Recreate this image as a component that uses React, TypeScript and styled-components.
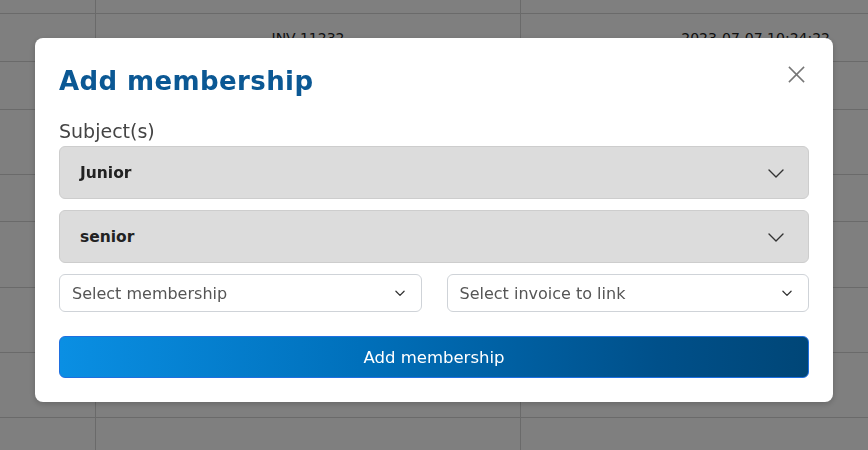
import React from "react";
import styled, { createGlobalStyle } from "styled-components";

const rows = [
  { h: 14 },
  { h: 48, inv: "INV-11232", date: "2023-07-07 10:24:22" },
  { h: 48 },
  { h: 65 },
  { h: 47 },
  { h: 66 },
  { h: 65 },
  { h: 65 },
  { h: 40 },
];

function Chevron({ size }: { size: number }) {
  return (
    <svg width={size} height={size} viewBox="0 0 24 24" fill="none" stroke="currentColor" strokeWidth={size > 14 ? 1.4 : 2.2} strokeLinecap="round" strokeLinejoin="round">
      <polyline points="5 9 12 16 19 9" />
    </svg>
  );
}

function App() {
  return (
    <>
      <Global />
      <S.Table>
        {rows.map((r, i) => (
          <S.Row key={i} style={{ height: r.h }}>
            <S.Cell />
            <S.Cell $center>{r.inv}</S.Cell>
            <S.Cell $right>{r.date}</S.Cell>
          </S.Row>
        ))}
      </S.Table>
      <S.Overlay>
        <S.Modal>
          <S.Header>
            <S.Title>Add membership</S.Title>
            <S.Close aria-label="close">
              <svg width="19" height="19" viewBox="0 0 20 20" stroke="currentColor" strokeWidth="1.6">
                <line x1="2" y1="2" x2="18" y2="18" />
                <line x1="18" y1="2" x2="2" y2="18" />
              </svg>
            </S.Close>
          </S.Header>
          <S.Label>Subject(s)</S.Label>
          <S.Subject>
            <span>Junior</span>
            <Chevron size={24} />
          </S.Subject>
          <S.Subject>
            <span>senior</span>
            <Chevron size={24} />
          </S.Subject>
          <S.SelectRow>
            <S.Select>
              <span>Select membership</span>
              <Chevron size={14} />
            </S.Select>
            <S.Select>
              <span>Select invoice to link</span>
              <Chevron size={14} />
            </S.Select>
          </S.SelectRow>
          <S.Button>Add membership</S.Button>
        </S.Modal>
      </S.Overlay>
    </>
  );
}

const Global = createGlobalStyle`
  html, body { margin: 0; padding: 0; background: #fff; overflow: hidden; }
  body { font-family: "DejaVu Sans", "Noto Sans", sans-serif; }
`;

const S = {
  Table: styled.div`
    width: 100%;
    display: flex;
    flex-direction: column;
  `,
  Row: styled.div`
    display: grid;
    grid-template-columns: 96px 425px 1fr;
    border-bottom: 1px solid #d4d4d4;
    box-sizing: border-box;
  `,
  Cell: styled.div<{ $center?: boolean; $right?: boolean }>`
    display: flex;
    align-items: center;
    justify-content: ${({ $center, $right }) => ($center ? "center" : $right ? "flex-end" : "flex-start")};
    padding-right: ${({ $right }) => ($right ? "38px" : "0")};
    border-right: 1px solid #d4d4d4;
    font-size: 14px;
    color: #222;
    &:last-child { border-right: none; }
  `,
  Overlay: styled.div`
    position: fixed;
    inset: 0;
    background: rgba(0, 0, 0, 0.5);
    display: flex;
    justify-content: center;
    align-items: flex-start;
    padding-top: 38px;
  `,
  Modal: styled.div`
    width: 798px;
    box-sizing: border-box;
    background: #fff;
    border-radius: 8px;
    padding: 24px 24px 24px;
    display: flex;
    flex-direction: column;
    box-shadow: 0 2px 6px rgba(0, 0, 0, 0.2);
  `,
  Header: styled.div`
    display: flex;
    justify-content: space-between;
    align-items: flex-start;
    height: 46px;
  `,
  Title: styled.h2`
    margin: 4px 0 0;
    font-size: 26px;
    font-weight: 700;
    color: #0b5894;
    letter-spacing: 0.4px;
  `,
  Close: styled.button`
    border: none;
    background: none;
    padding: 0;
    margin: 3px 3px 0 0;
    color: #767676;
    display: flex;
    cursor: pointer;
  `,
  Label: styled.div`
    font-size: 19px;
    color: #444;
    height: 34px;
    padding-top: 8px;
    box-sizing: border-box;
    margin-top: 4px;
  `,
  Subject: styled.div`
    height: 53px;
    margin-bottom: 11px;
    background: #dcdcdc;
    border: 1px solid #cdcdcd;
    border-radius: 6px;
    box-sizing: border-box;
    display: flex;
    align-items: center;
    justify-content: space-between;
    padding: 0 20px 0 20px;
    font-size: 15.5px;
    font-weight: 700;
    color: #222;
    svg { color: #333; }
  `,
  SelectRow: styled.div`
    display: grid;
    grid-template-columns: 1fr 1fr;
    gap: 25px;
  `,
  Select: styled.div`
    height: 38px;
    border: 1px solid #cfd3d8;
    border-radius: 6px;
    box-sizing: border-box;
    display: flex;
    align-items: center;
    justify-content: space-between;
    padding: 0 14px 0 12px;
    font-size: 16px;
    color: #555;
    svg { color: #333; }
  `,
  Button: styled.button`
    margin-top: 24px;
    height: 42px;
    border: 1px solid #1f6fe0;
    border-radius: 6px;
    background: linear-gradient(90deg, #0a8fe3 0%, #0070bb 40%, #00508a 80%, #004677 100%);
    color: #fff;
    font-family: inherit;
    font-size: 16.5px;
    cursor: pointer;
  `,
};

export default App;
